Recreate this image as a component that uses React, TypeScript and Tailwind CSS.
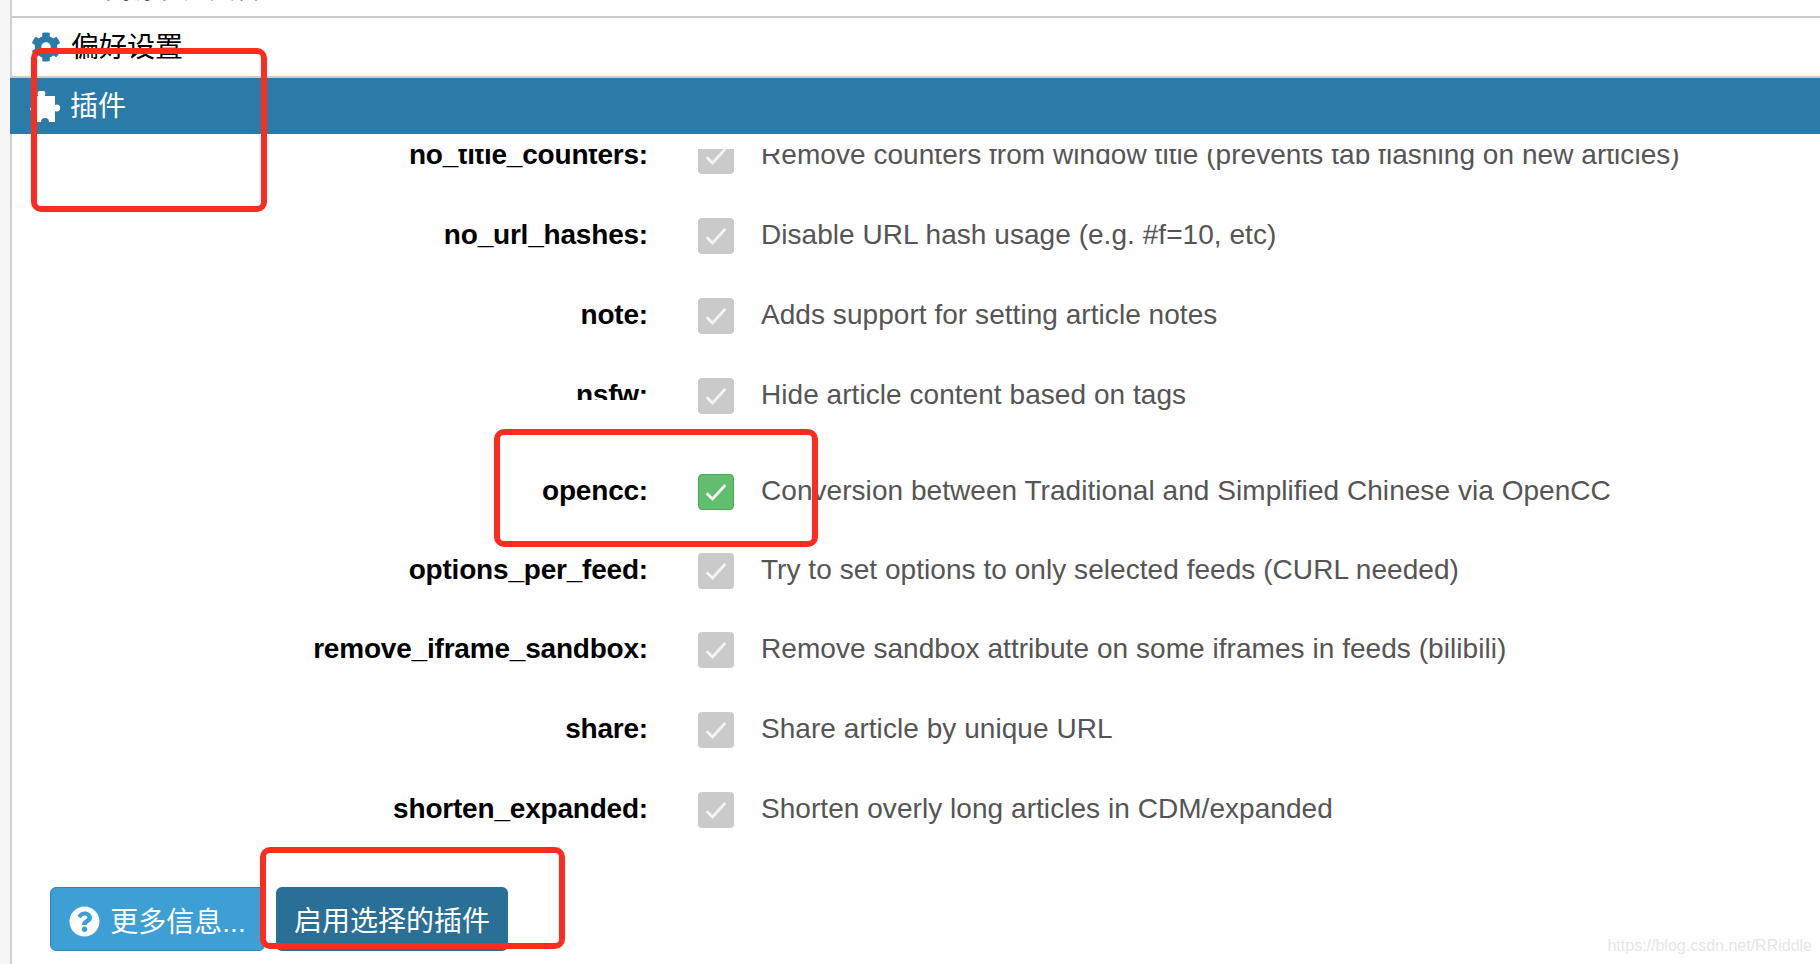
import React from 'react';
import { FaCog, FaQuestionCircle } from 'react-icons/fa';

const FONT = { fontFamily: '"Liberation Sans", "Noto Sans CJK SC", sans-serif' };

const PuzzleIcon = () => (
  <svg viewBox="0 0 31 31" className="w-[31px] h-[31px]" fill="currentColor">
    <path d="M7 5H9.500A3.800 3.800 0 1 1 15.500 5H26V14A3.500 3.500 0 1 1 26 20V31H20A4 4 0 0 0 12 31H7V21A3.600 3.600 0 1 1 7 15Z" />
  </svg>
);

const Check = ({ on }: { on?: boolean }) => (
  <div
    className={`w-9 h-9 rounded-[4px] flex items-center justify-center shrink-0 ${
      on ? 'bg-[#62bd6e] border border-[#4cae5a]' : 'bg-[#cacaca]'
    }`}
  >
    <svg viewBox="0 0 24 24" className="w-[28px] h-[28px]" fill="none" stroke="#f4f4f4" strokeWidth="2.400">
      <path d="M4 13l5 5L20 6" />
    </svg>
  </div>
);

const Row = ({
  name,
  desc,
  on,
  h = 80,
  labelClass = 'pb-[2px]',
}: {
  name: string;
  desc: string;
  on?: boolean;
  h?: number;
  labelClass?: string;
}) => (
  <div className="flex items-center" style={{ height: h }}>
    <div className={`w-[636px] text-right font-bold text-black tracking-[-0.2px] shrink-0 ${labelClass}`}>{name}</div>
    <div className="ml-[50px]">
      <Check on={on} />
    </div>
    <div className="ml-[27px] pb-[2px] text-[#555] tracking-[0.05px] whitespace-nowrap">{desc}</div>
  </div>
);

export default function App() {
  return (
    <div className="w-[1820px] h-[964px] bg-[#f6f6f6] overflow-hidden relative text-[28px]" style={FONT}>
      <div className="h-full ml-[10px] bg-white border-l-2 border-[#cfcfcf] flex flex-col">
        {/* top header, almost scrolled away */}
        <div className="h-[18px] border-b-2 border-[#cccccc] overflow-hidden shrink-0">
          <div className="mt-[-29px] ml-[67px] text-[26px] leading-[36px] text-[#333]">订阅源和分类管理</div>
        </div>

        <div className="h-[60px] border-b-2 border-[#cccccc] flex items-center pl-[19px] shrink-0">
          <FaCog className="w-[30px] h-[30px] text-[#2b7ba8]" />
          <span className="ml-[10px] pt-[2px] text-black">偏好设置</span>
        </div>

        <div className="h-[56px] -ml-[2px] bg-[#2b7ba8] flex items-center pl-[19px] text-white shrink-0">
          <PuzzleIcon />
          <span className="ml-[10px] pt-[2px]">插件</span>
        </div>

        <div className="h-[15px] shrink-0" />
        {/* first row is cut off by the scroll area */}
        <div className="h-[47px] overflow-hidden shrink-0">
          <div className="-mt-[33px]">
            <Row
              name="no_title_counters:"
              desc="Remove counters from window title (prevents tab flashing on new articles)"
            />
          </div>
        </div>
        <Row name="no_url_hashes:" desc="Disable URL hash usage (e.g. #f=10, etc)" />
        <Row name="note:" desc="Adds support for setting article notes" />
        <Row
          name="nsfw:"
          desc="Hide article content based on tags"
          labelClass="h-[21px] mb-[13px] leading-[32px] overflow-hidden"
        />
        <div className="h-[16px] shrink-0" />
        <Row name="opencc:" desc="Conversion between Traditional and Simplified Chinese via OpenCC" on />
        <Row name="options_per_feed:" desc="Try to set options to only selected feeds (CURL needed)" h={78} />
        <Row name="remove_iframe_sandbox:" desc="Remove sandbox attribute on some iframes in feeds (bilibili)" />
        <Row name="share:" desc="Share article by unique URL" />
        <Row name="shorten_expanded:" desc="Shorten overly long articles in CDM/expanded" />

        <div className="flex items-start pl-[38px] pt-[37px] gap-[11px] text-white">
          <button className="w-[215px] h-[64px] pt-[4px] rounded-[6px] bg-[#3e9fd5] border border-[#2f86b8] flex items-center justify-center gap-[10px]">
            <FaQuestionCircle className="w-[31px] h-[31px]" />
            <span className="pt-[3px]">更多信息...</span>
          </button>
          <button className="w-[232px] h-[64px] pt-[6px] rounded-[6px] bg-[#2a6f96]">启用选择的插件</button>
        </div>
      </div>

      {/* red annotation frames */}
      <div className="absolute left-[31px] top-[48px] w-[236px] h-[164px] border-[6px] border-[#fb2d20] rounded-[10px]" />
      <div className="absolute left-[494px] top-[429px] w-[324px] h-[118px] border-[6px] border-[#fb2d20] rounded-[10px]" />
      <div className="absolute left-[260px] top-[847px] w-[305px] h-[102px] border-[6px] border-[#fb2d20] rounded-[10px]" />

      <div className="absolute right-[8px] top-[934px] text-[16px] text-[#e6e6e6]">https://blog.csdn.net/RRiddle</div>
    </div>
  );
}
